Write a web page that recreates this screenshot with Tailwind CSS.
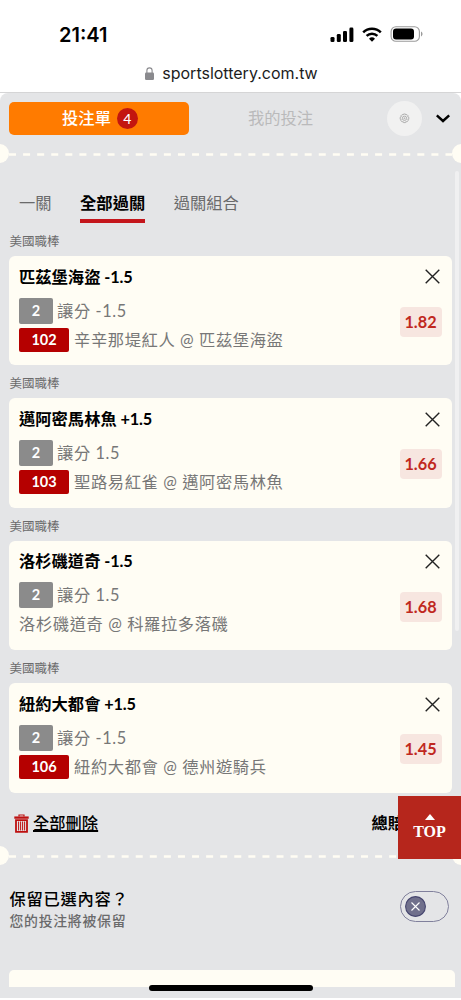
<!DOCTYPE html>
<html lang="zh-TW">
<head>
<meta charset="utf-8">
<meta name="viewport" content="width=device-width, initial-scale=1">
<title>投注單</title>
<script src="https://cdn.jsdelivr.net/npm/@tailwindcss/browser@4"></script>
</head>
<body class="bg-white">
<div class="relative flex h-[1000px] w-[461px] flex-col overflow-hidden bg-white font-['Lato','Noto_Sans_CJK_TC',sans-serif] text-[16.3px] whitespace-nowrap text-black">

  <header class="flex h-[93px] shrink-0 flex-col border-b border-[#d5d5d6] font-['Inter',sans-serif]">
    <div class="flex h-[68px] items-center justify-between pr-[38px] pl-[59px]">
      <span class="pt-[2px] text-[20px] leading-none font-semibold">21:41</span>
      <div class="flex items-center gap-[8px]">
        <svg class="h-[15px] w-[24px]" viewBox="0 0 24 15"><rect x=".5" y="10" width="4" height="5" rx="1.3"/><rect x="6.8" y="7" width="4" height="8" rx="1.3"/><rect x="13" y="4" width="4" height="11" rx="1.3"/><rect x="19.4" y=".6" width="4" height="14.4" rx="1.3"/></svg>
        <svg class="h-[15px] w-[20px]" viewBox="0 0 20 15" fill="none" stroke="#000" stroke-width="2.5"><path d="M1.2 5.3a12.6 12.6 0 0 1 17.6 0"/><path d="M4.6 8.8a7.8 7.8 0 0 1 10.8 0"/><path d="M7 11.8a4.3 4.3 0 0 1 6 0L10 14.8Z" fill="#000" stroke="none"/></svg>
        <svg class="h-[16px] w-[33px]" viewBox="0 0 33 16"><rect x="1.1" y=".7" width="28.3" height="14.6" rx="4.8" fill="none" stroke="#9b9b9b" stroke-width="1.1"/><rect x="3" y="2.6" width="21" height="10.8" rx="3"/><path d="M31 5.6c2 .8 2 4 0 4.8Z" fill="#9b9b9b"/></svg>
      </div>
    </div>
    <div class="flex h-[11px] items-center justify-center gap-[8px] pl-[2px]">
      <svg class="h-[13px] w-[9px]" viewBox="0 0 9 13"><rect y="5.5" width="9" height="7.5" rx="1.2" fill="#8a8a8e"/><path d="M1.9 6V3.5a2.6 2.6 0 0 1 5.2 0V6" fill="none" stroke="#8a8a8e" stroke-width="1.1"/></svg>
      <span class="pb-[2px] text-[16px] leading-none text-[#1c1c1c]">sportslottery.com.tw</span>
    </div>
  </header>

  <main class="flex h-[905px] shrink-0 flex-col rounded-t-[8px] bg-[#e4e5e7]">
    <div class="flex h-[51px] items-center pr-[11px] pl-[9px]">
      <div class="flex h-[33px] w-[180px] items-center justify-center gap-[6px] rounded-[5px] bg-[#ff7b00] pl-[2px] font-medium text-white">
        <span class="leading-none">投注單</span>
        <span class="flex size-[21px] items-center justify-center rounded-full bg-[#c3160f] text-[14px] leading-none">4</span>
      </div>
      <span class="ml-[59px] leading-none text-[#bababb]">我的投注</span>
      <span class="ml-auto flex size-[35px] items-center justify-center rounded-full bg-[#f1f1f1]">
        <svg class="size-[11px]" viewBox="0 0 22 22" fill="none" stroke="#a5a5a5" stroke-width="1.7"><path d="M9 2h4l.7 2 2-.9 2.6 2.6-.9 2 2.2.8v4l-2.2.8.9 2-2.6 2.6-2-.9-.7 2.2H9l-.7-2.2-2 .9-2.6-2.6.9-2-2.2-.8v-4l2.2-.8-.9-2 2.6-2.6 2 .9Z"/><circle cx="11" cy="10.6" r="4.3"/><circle cx="11" cy="10.6" r="1"/></svg>
      </span>
      <svg class="ml-[14px] h-[9px] w-[14px]" viewBox="0 0 14 9" fill="none" stroke="#000" stroke-width="2.5"><path d="m.8 1.4 6.2 5.6 6.2-5.6"/></svg>
    </div>

    <div class="flex h-[20px] shrink-0 items-center justify-between">
      <span class="mb-[1px] -ml-[10px] size-[19px] shrink-0 rounded-full bg-[#fffdf4]"></span>
      <svg class="mt-[1px] h-[3px] w-[443px] shrink-0" viewBox="0 0 443 3"><path d="M0 1.5h443" stroke="#fffdf4" stroke-width="2.4" stroke-dasharray="7 7.08"/></svg>
      <span class="-mr-[10px] mb-[1px] size-[19px] shrink-0 rounded-full bg-[#fffdf4]"></span>
    </div>

    <nav class="flex h-[59px] shrink-0 items-end gap-[28.5px] pl-[19px] text-[#6a6a6b]">
      <span class="h-[32px] leading-[24px]">一關</span>
      <span class="h-[32px] border-b-4 border-[#c4161c] leading-[24px] font-bold text-black">全部過關</span>
      <span class="h-[32px] leading-[24px]">過關組合</span>
    </nav>

    <section class="flex h-[32.5px] shrink-0 items-center pt-[6px] pl-[9.5px] text-[12.5px] leading-none text-[#6a6a6b]">美國職棒</section>
    <article class="mx-[9px] flex h-[109.5px] shrink-0 justify-between rounded-[6px] bg-[#fffdf4] pr-[10.5px] pl-[10px]">
      <div class="flex flex-col">
        <h3 class="mt-[9px] h-[24px] leading-[24px] font-bold">匹茲堡海盜<span class="tracking-[-.15px]"> -1.5</span></h3>
        <div class="mt-[9px] flex h-[26px] items-center gap-[4px]"><b class="flex h-full w-[34px] items-center justify-center rounded-[2px] bg-[#8b8b8b] text-[14.5px] text-white">2</b><span class="leading-[24px] tracking-[.6px] text-[#777]">讓分 -1.5</span></div>
        <div class="mt-[4px] flex h-[24px] items-center gap-[5px]"><b class="flex h-full w-[50px] items-center justify-center rounded-[2px] bg-[#b50000] text-[14.5px] text-white">102</b><span class="leading-[24px] tracking-[.6px] text-[#777]">辛辛那堤紅人 @ 匹茲堡海盜</span></div>
      </div>
      <div class="flex flex-col items-end">
        <svg class="mt-[13.5px] mr-[2px] size-[15px]" viewBox="0 0 15 15" fill="none" stroke="#222" stroke-width="1.4"><path d="m.7.7 13.6 13.6M14.3.7.7 14.3"/></svg>
        <b class="mt-[22.5px] flex h-[30px] w-[42px] items-center justify-center rounded-[4px] bg-[#f7e6e0] pt-[1px] text-[#c0281e]">1.82</b>
      </div>
    </article>

    <section class="flex h-[33px] shrink-0 items-center pt-[6px] pl-[9.5px] text-[12.5px] leading-none text-[#6a6a6b]">美國職棒</section>
    <article class="mx-[9px] flex h-[109.5px] shrink-0 justify-between rounded-[6px] bg-[#fffdf4] pr-[10.5px] pl-[10px]">
      <div class="flex flex-col">
        <h3 class="mt-[9px] h-[24px] leading-[24px] font-bold">邁阿密馬林魚<span class="tracking-[-.15px]"> +1.5</span></h3>
        <div class="mt-[9px] flex h-[26px] items-center gap-[4px]"><b class="flex h-full w-[34px] items-center justify-center rounded-[2px] bg-[#8b8b8b] text-[14.5px] text-white">2</b><span class="leading-[24px] tracking-[.6px] text-[#777]">讓分 1.5</span></div>
        <div class="mt-[4px] flex h-[24px] items-center gap-[5px]"><b class="flex h-full w-[50px] items-center justify-center rounded-[2px] bg-[#b50000] text-[14.5px] text-white">103</b><span class="leading-[24px] tracking-[.6px] text-[#777]">聖路易紅雀 @ 邁阿密馬林魚</span></div>
      </div>
      <div class="flex flex-col items-end">
        <svg class="mt-[13.5px] mr-[2px] size-[15px]" viewBox="0 0 15 15" fill="none" stroke="#222" stroke-width="1.4"><path d="m.7.7 13.6 13.6M14.3.7.7 14.3"/></svg>
        <b class="mt-[22.5px] flex h-[30px] w-[42px] items-center justify-center rounded-[4px] bg-[#f7e6e0] pt-[1px] text-[#c0281e]">1.66</b>
      </div>
    </article>

    <section class="flex h-[33px] shrink-0 items-center pt-[6px] pl-[9.5px] text-[12.5px] leading-none text-[#6a6a6b]">美國職棒</section>
    <article class="mx-[9px] flex h-[109.5px] shrink-0 justify-between rounded-[6px] bg-[#fffdf4] pr-[10.5px] pl-[10px]">
      <div class="flex flex-col">
        <h3 class="mt-[8.5px] h-[24px] leading-[24px] font-bold">洛杉磯道奇<span class="tracking-[-.15px]"> -1.5</span></h3>
        <div class="mt-[9px] flex h-[26px] items-center gap-[4px]"><b class="flex h-full w-[34px] items-center justify-center rounded-[2px] bg-[#8b8b8b] text-[14.5px] text-white">2</b><span class="leading-[24px] tracking-[.6px] text-[#777]">讓分 1.5</span></div>
        <div class="mt-[4px] flex h-[24px] items-center"><span class="leading-[24px] tracking-[.6px] text-[#777]">洛杉磯道奇 @ 科羅拉多落磯</span></div>
      </div>
      <div class="flex flex-col items-end">
        <svg class="mt-[13.5px] mr-[2px] size-[15px]" viewBox="0 0 15 15" fill="none" stroke="#222" stroke-width="1.4"><path d="m.7.7 13.6 13.6M14.3.7.7 14.3"/></svg>
        <b class="mt-[22.5px] flex h-[30px] w-[42px] items-center justify-center rounded-[4px] bg-[#f7e6e0] pt-[1px] text-[#c0281e]">1.68</b>
      </div>
    </article>

    <section class="flex h-[33px] shrink-0 items-center pt-[6px] pl-[9.5px] text-[12.5px] leading-none text-[#6a6a6b]">美國職棒</section>
    <article class="mx-[9px] flex h-[109.5px] shrink-0 justify-between rounded-[6px] bg-[#fffdf4] pr-[10.5px] pl-[10px]">
      <div class="flex flex-col">
        <h3 class="mt-[9px] h-[24px] leading-[24px] font-bold">紐約大都會<span class="tracking-[-.15px]"> +1.5</span></h3>
        <div class="mt-[9px] flex h-[26px] items-center gap-[4px]"><b class="flex h-full w-[34px] items-center justify-center rounded-[2px] bg-[#8b8b8b] text-[14.5px] text-white">2</b><span class="leading-[24px] tracking-[.6px] text-[#777]">讓分 -1.5</span></div>
        <div class="mt-[4px] flex h-[24px] items-center gap-[5px]"><b class="flex h-full w-[50px] items-center justify-center rounded-[2px] bg-[#b50000] text-[14.5px] text-white">106</b><span class="leading-[24px] tracking-[.6px] text-[#777]">紐約大都會 @ 德州遊騎兵</span></div>
      </div>
      <div class="flex flex-col items-end">
        <svg class="mt-[13.5px] mr-[2px] size-[15px]" viewBox="0 0 15 15" fill="none" stroke="#222" stroke-width="1.4"><path d="m.7.7 13.6 13.6M14.3.7.7 14.3"/></svg>
        <b class="mt-[22.5px] flex h-[30px] w-[42px] items-center justify-center rounded-[4px] bg-[#f7e6e0] pt-[1px] text-[#c0281e]">1.45</b>
      </div>
    </article>

    <div class="flex h-[53px] shrink-0 items-center pt-[8px] pl-[13.5px] font-medium">
      <svg class="h-[19px] w-[15px]" viewBox="0 0 15 19" fill="none" stroke="#bd1010"><path d="M5 2.5V1h5v1.5" stroke-width="1.2"/><path d="M.3 3.6h14.4" stroke-width="2.3"/><path d="M2 6.2h11v11.6H2Z" stroke-width="1.8"/><path d="M4.6 7.5v9M6.6 7.5v9M8.6 7.5v9M10.6 7.5v9" stroke-width="1"/></svg>
      <span class="ml-[4.5px] underline decoration-[1.5px] underline-offset-[1px]">全部刪除</span>
      <span class="mr-[57px] ml-auto font-bold">總賠</span>
    </div>

    <div class="flex h-[20px] shrink-0 items-center justify-between">
      <span class="mb-[1px] -ml-[10px] size-[19px] shrink-0 rounded-full bg-[#fffdf4]"></span>
      <svg class="mt-[1px] h-[3px] w-[443px] shrink-0" viewBox="0 0 443 3"><path d="M0 1.5h443" stroke="#fffdf4" stroke-width="2.4" stroke-dasharray="7 7.08"/></svg>
      <span class="-mr-[10px] mb-[1px] size-[19px] shrink-0 rounded-full bg-[#fffdf4]"></span>
    </div>

    <div class="flex h-[104px] shrink-0 justify-between pt-[21.5px] pr-[12px] pl-[9.5px]">
      <div class="flex flex-col">
        <span class="h-[24px] leading-[24px] font-medium tracking-[.7px]">保留已選內容？</span>
        <span class="h-[20px] text-[13.9px] leading-[20px] font-medium tracking-[.7px] text-[#6a6a6b]">您的投注將被保留</span>
      </div>
      <span class="mt-[3.5px] flex h-[31px] w-[49px] items-center rounded-full border border-[#80809c] pl-[4px]">
        <svg class="size-[21px]" viewBox="0 0 21 21"><circle cx="10.5" cy="10.5" r="9.9" fill="#70708c" stroke="#46466f" stroke-width="1.1"/><path d="m6.5 6.5 8 8m0-8-8 8" stroke="#fff" stroke-width="1.1"/></svg>
      </span>
    </div>

    <div class="mr-[6px] ml-[9px] h-[17px] shrink-0 rounded-t-[5px] bg-[#fffdf4]"></div>
  </main>

  <div class="absolute top-[171px] right-[2px] h-[460px] w-[4px] rounded-full bg-[#f0f0f1]"></div>
  <div class="absolute top-[796px] left-[398px] flex h-[63px] w-[63px] flex-col items-center bg-[#b6261c] pt-[18px] font-['Liberation_Serif',serif] text-white">
    <svg class="h-[6px] w-[10px]" viewBox="0 0 10 6"><path d="m5 0 5 6H0Z" fill="#fff"/></svg>
    <span class="mt-[4px] text-[16px] leading-none font-bold">TOP</span>
  </div>
  <div class="absolute top-[985px] left-[149px] h-[6px] w-[164px] rounded-full bg-black"></div>
</div>
</body>
</html>
